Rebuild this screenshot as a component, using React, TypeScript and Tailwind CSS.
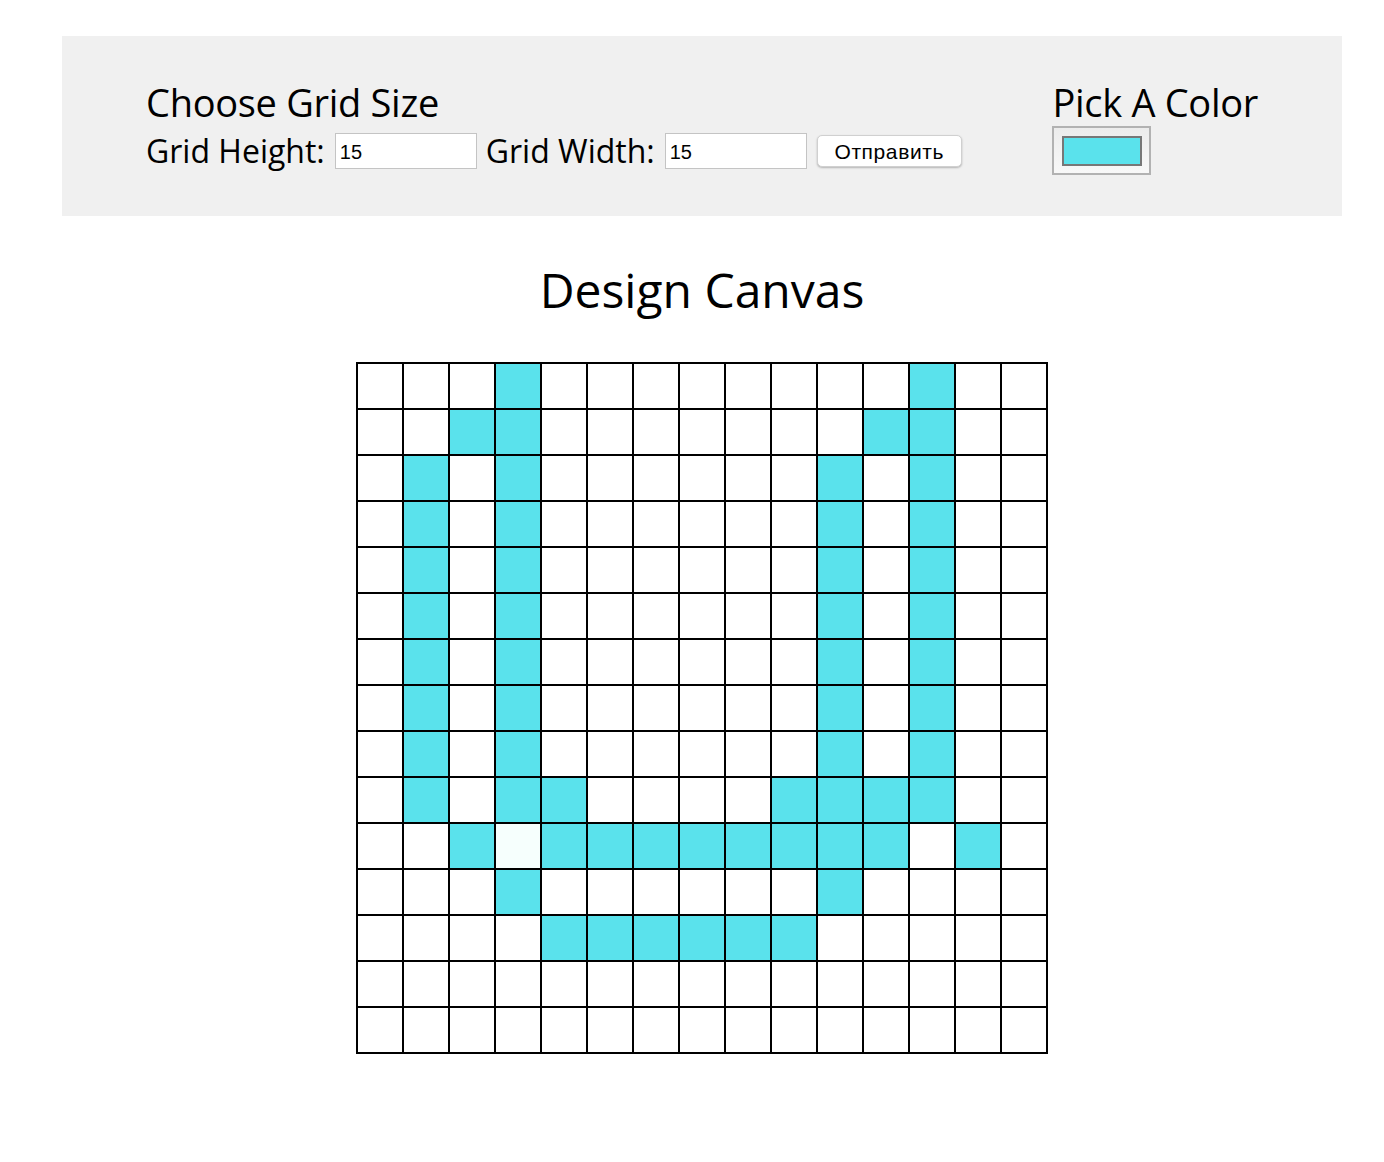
import React from "react";

const SIZE = 15;

// cells painted in the reference, as "row,col"
const painted: Record<string, string> = {};
const paint = (r: number, cols: number[], color = "#5ae2ec") => {
  cols.forEach((c) => (painted[`${r},${c}`] = color));
};
paint(0, [3, 12]);
paint(1, [2, 3, 11, 12]);
for (let r = 2; r <= 8; r++) paint(r, [1, 3, 10, 12]);
paint(9, [1, 3, 4, 9, 10, 11, 12]);
paint(10, [2, 4, 5, 6, 7, 8, 9, 10, 11, 13]);
paint(10, [3], "#f6fffd");
paint(11, [3, 10]);
paint(12, [4, 5, 6, 7, 8, 9]);

function Cell({ r, c }: { r: number; c: number }) {
  const color = painted[`${r},${c}`] ?? "#ffffff";
  return <div className="w-[44px] h-[44px]" style={{ backgroundColor: color }} />;
}

export default function App() {
  const rows = Array.from({ length: SIZE }, (_, r) => r);
  const cols = Array.from({ length: SIZE }, (_, c) => c);

  return (
    <div className="min-h-[1162px] bg-white pt-[36px] font-['Open_Sans',sans-serif] text-black">
      <header className="ml-[62px] w-[1280px] h-[180px] bg-[#f0f0f0] flex justify-between px-[84px] pt-[44px]">
        <div>
          <h1 className="text-[38px] leading-[44px] tracking-[-0.3px]">Choose Grid Size</h1>
          <form className="flex items-center mt-[9px]" onSubmit={(e) => e.preventDefault()}>
            <label className="text-[32px] leading-[36px]">Grid Height:</label>
            <input
              type="number"
              defaultValue={15}
              className="ml-[10px] w-[142px] h-[36px] bg-white border border-[#c4c4c4] px-[4px] pt-[3px] text-[20px] font-['Liberation_Sans',sans-serif] outline-none"
            />
            <label className="ml-[9px] text-[32px] leading-[36px]">Grid Width:</label>
            <input
              type="number"
              defaultValue={15}
              className="ml-[10px] w-[142px] h-[36px] bg-white border border-[#c4c4c4] px-[4px] pt-[3px] text-[20px] font-['Liberation_Sans',sans-serif] outline-none"
            />
            <button
              type="submit"
              className="ml-[10px] w-[145px] h-[32px] bg-white border border-[#d0d0d0] rounded-[5px] shadow-[0_1px_2px_rgba(0,0,0,0.25)] text-[21px] tracking-[0.6px] font-['Liberation_Sans',sans-serif]"
            >
              Отправить
            </button>
          </form>
        </div>
        <div>
          <h2 className="text-[38px] leading-[44px] tracking-[-0.3px]">Pick A Color</h2>
          <div className="mt-[2px] w-[99px] h-[49px] border-2 border-[#b2b2b2] bg-gradient-to-b from-[#ececec] to-[#f8f8f8] flex items-center justify-center">
            <div className="w-[80px] h-[30px] border-2 border-[#777777] bg-[#5ae2ec]" />
          </div>
        </div>
      </header>

      <div className="ml-[62px] w-[1280px] flex flex-col items-center">
        <h2 className="mt-[40px] text-[48px] leading-[68px]">Design Canvas</h2>
        <div className="mt-[38px] bg-black p-[2px] grid grid-cols-[repeat(15,44px)] gap-[2px]">
          {rows.map((r) => cols.map((c) => <Cell key={`${r}-${c}`} r={r} c={c} />))}
        </div>
      </div>
    </div>
  );
}
